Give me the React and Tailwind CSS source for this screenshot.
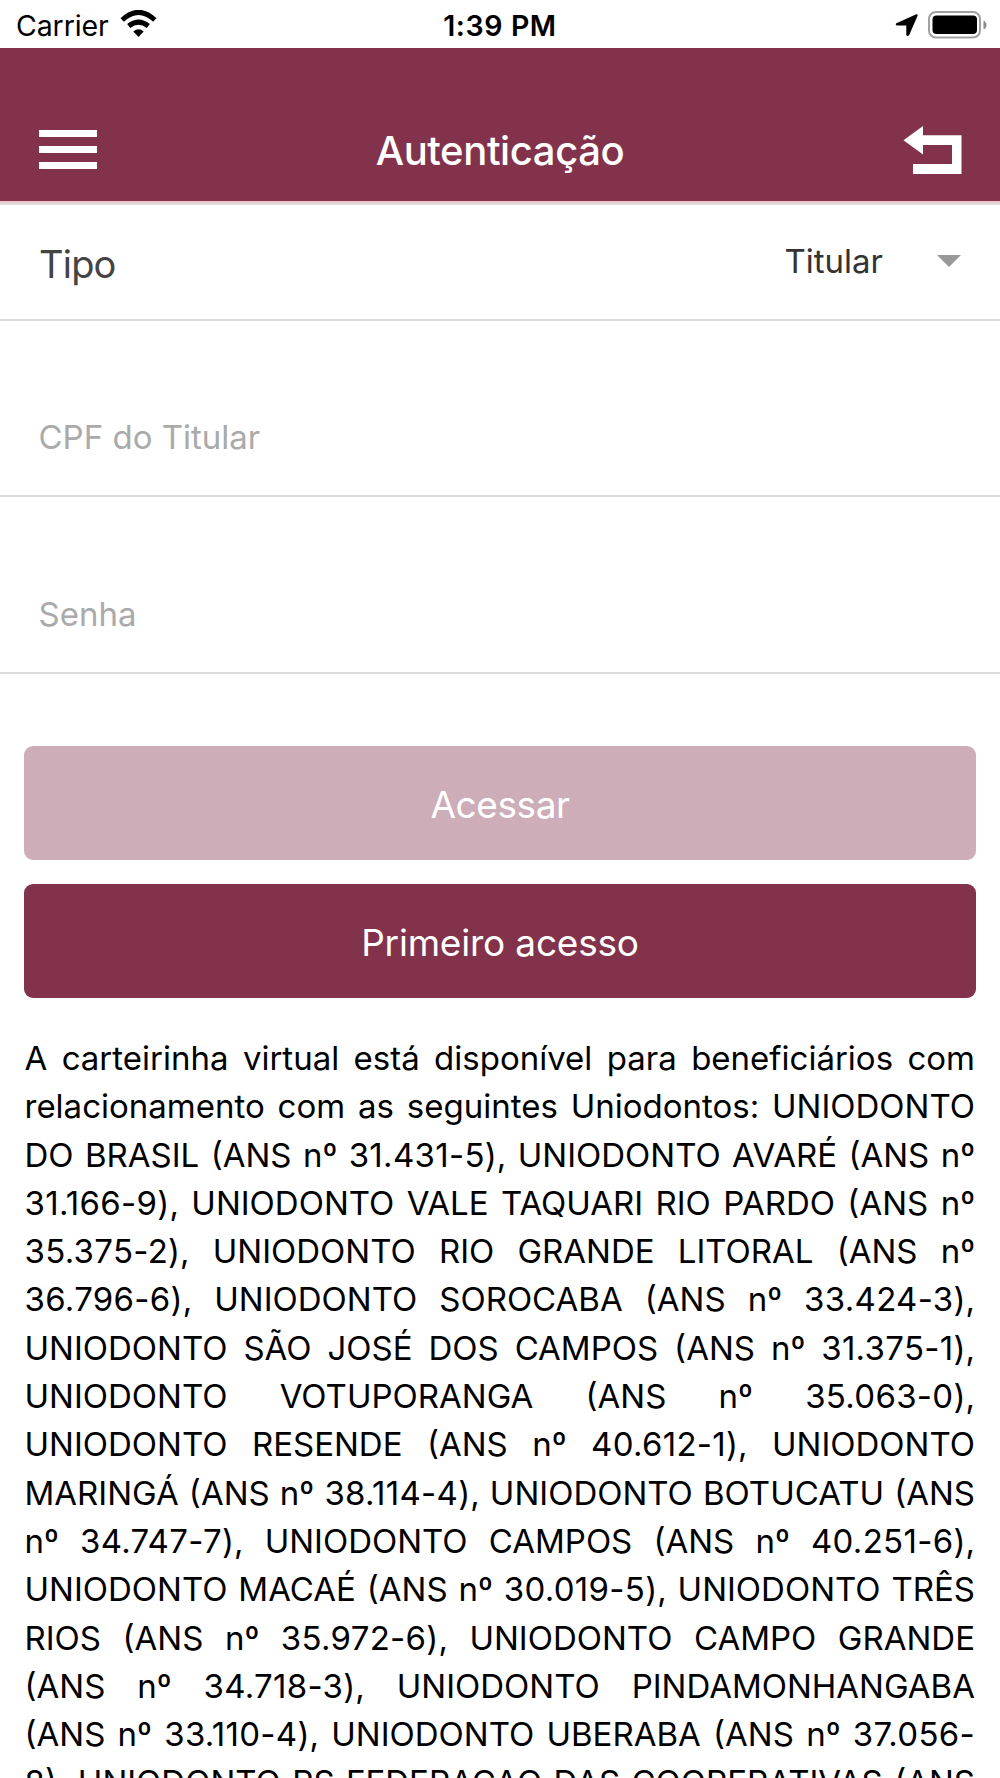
import React from 'react';

const lines = [
  'A carteirinha virtual está disponível para beneficiários com',
  'relacionamento com as seguintes Uniodontos: UNIODONTO',
  'DO BRASIL (ANS nº 31.431-5), UNIODONTO AVARÉ (ANS nº',
  '31.166-9), UNIODONTO VALE TAQUARI RIO PARDO (ANS nº',
  '35.375-2), UNIODONTO RIO GRANDE LITORAL (ANS nº',
  '36.796-6), UNIODONTO SOROCABA (ANS nº 33.424-3),',
  'UNIODONTO SÃO JOSÉ DOS CAMPOS (ANS nº 31.375-1),',
  'UNIODONTO VOTUPORANGA (ANS nº 35.063-0),',
  'UNIODONTO RESENDE (ANS nº 40.612-1), UNIODONTO',
  'MARINGÁ (ANS nº 38.114-4), UNIODONTO BOTUCATU (ANS',
  'nº 34.747-7), UNIODONTO CAMPOS (ANS nº 40.251-6),',
  'UNIODONTO MACAÉ (ANS nº 30.019-5), UNIODONTO TRÊS',
  'RIOS (ANS nº 35.972-6), UNIODONTO CAMPO GRANDE',
  '(ANS nº 34.718-3), UNIODONTO PINDAMONHANGABA',
  '(ANS nº 33.110-4), UNIODONTO UBERABA (ANS nº 37.056-',
  '8), UNIODONTO RS FEDERACAO DAS COOPERATIVAS (ANS',
];

function StatusBar() {
  return (
    <div className="flex-none grid grid-cols-3 items-center h-12 bg-white text-black text-[28.5px] leading-none">
      <div className="flex items-center pl-4 pt-[3px]">
        <span className="tracking-[-0.1px] pt-0.5">Carrier</span>
        <svg width="37" height="27" viewBox="0 0 37 27" className="ml-[11px] -mt-[4px]">
          <path d="M2.200 10Q18.500-5.200 34.800 10" fill="none" stroke="#000" strokeWidth="5" />
          <path d="M8.700 16Q18.500 8.200 28.300 16" fill="none" stroke="#000" strokeWidth="5" />
          <path d="M13.300 21.600Q18.500 16.800 23.700 21.600L18.500 27Z" fill="#000" />
        </svg>
      </div>
      <div className="text-center font-semibold pt-1 tracking-[0.6px]">1:39 PM</div>
      <div className="flex items-center justify-end pr-[13px] pt-px">
        <svg width="23" height="23" viewBox="0 0 23 23" className="mt-px">
          <path d="M21.300.200Q23 0 22.600 1.800L14.200 21Q12.400 23 11.300 21V11.600H2Q-.2 10.600 1.400 9.200Z" fill="#000" />
        </svg>
        <svg width="59" height="28" viewBox="0 0 59 28" className="ml-[10px]">
          <rect x="1" y="1" width="51" height="25.500" rx="7" fill="none" stroke="#a0a0a0" strokeWidth="2" />
          <rect x="4.500" y="4.500" width="44.500" height="18.500" rx="4" fill="#000" />
          <path d="M55.500 9.500Q58.500 11 58.500 14T55.500 18.500Z" fill="#8c8c8c" />
        </svg>
      </div>
    </div>
  );
}

function Header() {
  return (
    <header className="flex-none h-[155px] bg-[#82324a] border-b-2 border-[#f0c6cd] grid grid-cols-3 items-start text-white">
      <button className="w-[58px] ml-[39px] mt-[82px] flex flex-col gap-[9px]">
        <span className="h-[7px] bg-white"></span>
        <span className="h-[7px] bg-white"></span>
        <span className="h-[7px] bg-white"></span>
      </button>
      <h1 className="text-center font-medium text-[40px] leading-[48px] mt-[79px] tracking-[-0.4px]">Autenticação</h1>
      <button className="justify-self-end mr-[38px] mt-[78px]">
        <svg width="59" height="48" viewBox="0 0 59 48" fill="#fff" className="block">
          <path d="M.5 14.300 20 0V9.200H58.500V48H10V38H49V19H20V28.600Z" />
        </svg>
      </button>
    </header>
  );
}

export default function App() {
  return (
    <div className="w-[1000px] h-[1778px] overflow-hidden flex flex-col bg-white font-['Inter',sans-serif]">
      <StatusBar />
      <Header />

      {/* Formulário */}
      <div className="flex-none h-[118px] border-y-2 border-[#dcdcdc] flex items-start justify-between pl-[39px] pr-[39px]">
        <span className="text-[38px] leading-[46px] mt-[36px] tracking-[-0.8px] text-[#444]">Tipo</span>
        <div className="flex items-center mt-[36px]">
          <span className="text-[33px] leading-10 text-[#333]">Titular</span>
          <svg width="24" height="12" viewBox="0 0 24 12" className="ml-[54px]">
            <path d="M0 0H24L12 12Z" fill="#999" />
          </svg>
        </div>
      </div>
      <div className="flex-none h-[176px] border-b-2 border-[#dcdcdc] pl-[38.5px] pt-[96px] text-[33px] leading-10 text-[#aaa]">CPF do Titular</div>
      <div className="flex-none h-[177px] border-b-2 border-[#dcdcdc] pl-[38.5px] pt-[97px] text-[33px] leading-10 text-[#aaa]">Senha</div>

      {/* Botões */}
      <div className="flex-none flex flex-col gap-6 px-6 pt-[72px] text-[37px] text-white">
        <button className="h-[114px] pt-1 rounded-[9px] bg-[#cdadb8] tracking-[-0.4px]">Acessar</button>
        <button className="h-[114px] pt-[3px] rounded-[9px] bg-[#82324a] tracking-[-0.2px]">Primeiro acesso</button>
      </div>

      {/* Operadoras, os códigos ANS levam um pouco mais de espaço entre os dígitos */}
      <div className="flex-none mt-[36px] pl-[24.5px] pr-[25px] text-[33px] leading-[48.300px] text-black">
        {lines.map((line, idx) => (
          <p key={idx} className="whitespace-nowrap text-justify [text-align-last:justify]">
            {line.split(/(\d\d\.\d+-\d?)/).map((part, i) => (
              i % 2 ? <span key={i} className="tracking-[0.3px]">{part}</span> : part
            ))}
          </p>
        ))}
      </div>
    </div>
  );
}
